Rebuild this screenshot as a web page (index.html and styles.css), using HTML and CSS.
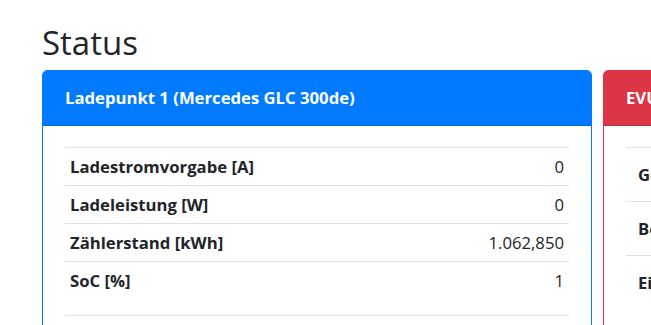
FILE: index.html
```html
<!DOCTYPE html>
<html lang="de">
<head>
    <meta charset="UTF-8">
    <meta name="viewport" content="width=device-width, initial-scale=1.0">
    <title>Status</title>
    <link rel="stylesheet" href="styles.css">
</head>
<body>
    <div class="page">
        <h2 class="title">Status</h2>
        <div class="cards">
            <div class="card card-blue">
                <div class="card-header">Ladepunkt 1 (Mercedes GLC 300de)</div>
                <div class="card-body">
                    <table class="table">
                        <tr><th>Ladestromvorgabe [A]</th><td>0</td></tr>
                        <tr><th>Ladeleistung [W]</th><td>0</td></tr>
                        <tr><th>Zählerstand [kWh]</th><td>1.062,850</td></tr>
                        <tr><th>SoC [%]</th><td>1</td></tr>
                    </table>
                    <table class="table">
                        <tr><th>Ladezeit</th><td>0:00</td></tr>
                    </table>
                </div>
            </div>
            <div class="card card-red">
                <div class="card-header">EVU</div>
                <div class="card-body">
                    <table class="table table-wide">
                        <tr><th>Gesamtleistung [W]</th><td>-1.245</td></tr>
                        <tr><th>Bezug [kWh]</th><td>12.530,4</td></tr>
                        <tr><th>Einspeisung [kWh]</th><td>8.114,2</td></tr>
                    </table>
                </div>
            </div>
        </div>
    </div>
</body>
</html>
```

FILE: styles.css
```css
body {
    margin: 0;
    font-family: "Open Sans", "Noto Sans", Arial, sans-serif;
    font-size: 16.7px;
    color: #212529;
    background-color: #ffffff;
    overflow: hidden;
}

.page {
    padding-left: 42px;
}

.title {
    font-size: 33px;
    font-weight: 400;
    line-height: 1.2;
    margin: 23px 0 7px 0;
}

.cards {
    display: flex;
    gap: 11px;
    align-items: flex-start;
}

.card {
    flex: 0 0 550px;
    box-sizing: border-box;
    border: 1px solid;
    border-radius: 5px;
    overflow: hidden;
    height: 300px;
}

.card-blue {
    border-color: #007bff;
}

.card-red {
    border-color: #dc3545;
}

.card-header {
    padding: 15px 22px;
    line-height: 24px;
    font-weight: 700;
    color: #ffffff;
    border-bottom: 1px solid rgba(0, 0, 0, 0.125);
}

.card-blue .card-header {
    background-color: #007bff;
}

.card-red .card-header {
    background-color: #dc3545;
}

.card-body {
    padding: 21px 22px;
}

.table {
    width: 100%;
    border-collapse: collapse;
    margin-bottom: 16px;
}

.table th,
.table td {
    border-top: 1px solid #dee2e6;
    padding: 6px 5px;
    line-height: 25px;
}

.table th {
    text-align: left;
    font-weight: 700;
}

.table td {
    text-align: right;
}

/* EVU card has roomier cells */
.table-wide th,
.table-wide td {
    padding: 14px 12px;
}
```
